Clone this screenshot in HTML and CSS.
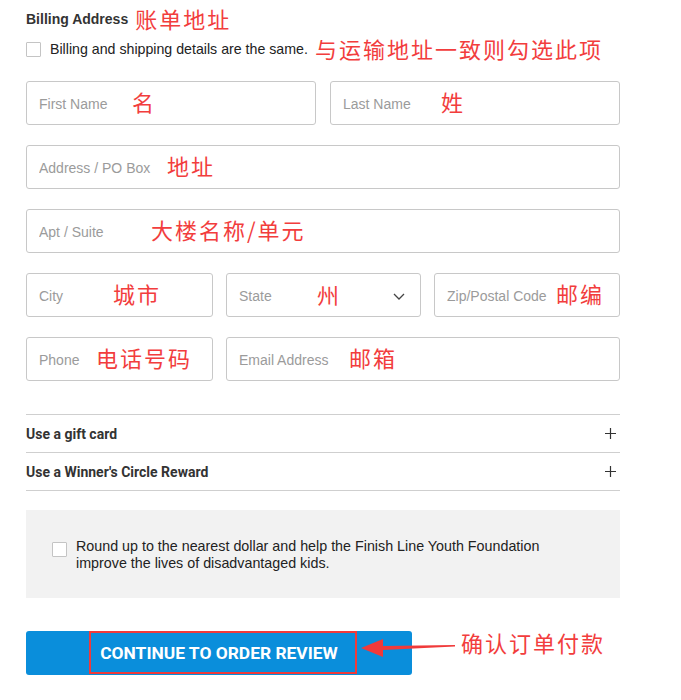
FILE: index.html
```html
<!DOCTYPE html>
<html lang="en">
<head>
    <meta charset="UTF-8">
    <meta name="viewport" content="width=device-width, initial-scale=1.0">
    <title>Billing Address</title>
    <link rel="stylesheet" href="styles.css">
</head>
<body>
    <div class="container">
        <div class="title-row">
            <h3 class="section-title">Billing Address</h3>
            <span class="note">账单地址</span>
        </div>
        <label class="same-row">
            <input type="checkbox" class="check">
            <span class="same-text">Billing and shipping details are the same.</span>
            <span class="note note-same">与运输地址一致则勾选此项</span>
        </label>

        <div class="fields">
            <div class="row row-2">
                <div class="field">
                    <input type="text" placeholder="First Name">
                    <span class="note n-first">名</span>
                </div>
                <div class="field">
                    <input type="text" placeholder="Last Name">
                    <span class="note n-last">姓</span>
                </div>
            </div>
            <div class="row">
                <div class="field">
                    <input type="text" placeholder="Address / PO Box">
                    <span class="note n-address">地址</span>
                </div>
            </div>
            <div class="row">
                <div class="field">
                    <input type="text" placeholder="Apt / Suite">
                    <span class="note n-apt">大楼名称/单元</span>
                </div>
            </div>
            <div class="row row-3">
                <div class="field">
                    <input type="text" placeholder="City">
                    <span class="note n-city">城市</span>
                </div>
                <div class="field field-select">
                    <span class="select-label">State</span>
                    <span class="note n-state">州</span>
                    <svg class="chevron" width="12" height="7" viewBox="0 0 12 7">
                        <polyline points="1,1 6,6 11,1" fill="none" stroke="#444" stroke-width="1.3"/>
                    </svg>
                </div>
                <div class="field">
                    <input type="text" placeholder="Zip/Postal Code">
                    <span class="note n-zip">邮编</span>
                </div>
            </div>
            <div class="row row-3">
                <div class="field">
                    <input type="text" placeholder="Phone">
                    <span class="note n-phone">电话号码</span>
                </div>
                <div class="field field-wide">
                    <input type="email" placeholder="Email Address">
                    <span class="note n-email">邮箱</span>
                </div>
            </div>
        </div>

        <div class="extras">
            <div class="extra-item">
                <span>Use a gift card</span>
                <svg class="plus" width="11" height="11" viewBox="0 0 11 11">
                    <path d="M5.5 0V11M0 5.5H11" stroke="#333" stroke-width="1.2"/>
                </svg>
            </div>
            <div class="extra-item">
                <span>Use a Winner's Circle Reward</span>
                <svg class="plus" width="11" height="11" viewBox="0 0 11 11">
                    <path d="M5.5 0V11M0 5.5H11" stroke="#333" stroke-width="1.2"/>
                </svg>
            </div>
        </div>

        <label class="roundup">
            <input type="checkbox" class="check">
            <span class="roundup-text">Round up to the nearest dollar and help the Finish Line Youth Foundation improve the lives of disadvantaged kids.</span>
        </label>

        <div class="submit-row">
            <button type="submit" class="btn-submit">CONTINUE TO ORDER REVIEW</button>
            <span class="mark"></span>
            <svg class="arrow" width="96" height="22" viewBox="0 0 96 22">
                <polygon points="94,8 94,9.5 22,13 22,20 0,11 22,2 22,9" fill="#f03a3a"/>
            </svg>
            <span class="note note-submit">确认订单付款</span>
        </div>
    </div>
</body>
</html>
```

FILE: styles.css
```css
body {
    margin: 0;
    background-color: #fff;
    font-family: 'Liberation Sans', Arial, sans-serif;
    color: #222;
}
.container {
    width: 594px;
    padding: 7px 26px 20px;
}
.note {
    font-family: 'Noto Sans CJK SC', sans-serif;
    font-size: 22px;
    letter-spacing: 2px;
    color: #f23d3d;
    line-height: 24px;
    white-space: nowrap;
}
.title-row {
    display: flex;
    align-items: center;
    height: 24px;
}
.title-row .note {
    margin-top: -3px;
}
.section-title {
    margin: 0 7px 0 0;
    font-size: 14px;
    font-weight: bold;
    color: #333;
}
.same-row {
    display: flex;
    align-items: center;
    height: 20px;
    margin-top: 8px;
}
.check {
    -webkit-appearance: none;
    appearance: none;
    width: 15px;
    height: 15px;
    margin: 0;
    flex-shrink: 0;
    border: 1px solid #c4c4c4;
    border-radius: 1px;
    background-color: #fff;
}
.same-text {
    margin-left: 9px;
    font-size: 14.2px;
    color: #222;
}
.note-same {
    margin-left: 7px;
    margin-top: -3px;
}
.fields {
    display: flex;
    flex-direction: column;
    gap: 20px;
    margin-top: 22px;
}
.row {
    display: grid;
    grid-template-columns: 1fr;
}
.row-2 {
    grid-template-columns: 1fr 1fr;
    column-gap: 14px;
}
.row-3 {
    grid-template-columns: 187px 195px 1fr;
    column-gap: 13px;
}
.field {
    position: relative;
    height: 44px;
}
.field input {
    box-sizing: border-box;
    width: 100%;
    height: 44px;
    padding: 2px 12px 0;
    border: 1px solid #c8c8c8;
    border-radius: 3px;
    font-family: inherit;
    font-size: 14px;
    color: #222;
    outline: none;
}
.field input::placeholder {
    color: #9b9b9b;
}
.field-wide {
    grid-column: span 2;
}
.field-select {
    box-sizing: border-box;
    display: flex;
    align-items: center;
    padding: 2px 12px 0;
    border: 1px solid #c8c8c8;
    border-radius: 3px;
}
.select-label {
    font-size: 14px;
    color: #9b9b9b;
}
.chevron {
    position: absolute;
    right: 15px;
    top: 19px;
}
.field .note {
    position: absolute;
    top: 8px;
}
.n-first { left: 106px; }
.n-last { left: 111px; }
.n-address { left: 141px; }
.n-apt { left: 125px; }
.n-city { left: 87px; }
.n-state { left: 90px; }
.n-zip { left: 122px; }
.n-phone { left: 70px; }
.n-email { left: 123px; }
.extras {
    margin-top: 33px;
    border-top: 1px solid #cfcfcf;
}
.extra-item {
    display: flex;
    justify-content: space-between;
    align-items: center;
    height: 37px;
    padding-right: 4px;
    border-bottom: 1px solid #cfcfcf;
    font-family: 'Liberation Sans Narrow', 'Roboto', sans-serif;
    font-size: 14px;
    font-weight: bold;
    color: #333;
}
.roundup {
    display: flex;
    align-items: flex-start;
    margin-top: 19px;
    padding: 28px 26px 27px;
    height: 33px;
    background-color: #f2f2f2;
}
.roundup .check {
    margin-top: 4px;
}
.roundup-text {
    max-width: 475px;
    margin-left: 9px;
    font-size: 14.3px;
    line-height: 17px;
    color: #222;
}
.submit-row {
    position: relative;
    margin-top: 33px;
    height: 44px;
}
.btn-submit {
    display: block;
    width: 386px;
    height: 44px;
    border: none;
    border-radius: 3px;
    background-color: #0a8edb;
    color: #fff;
    font-family: 'Liberation Sans Narrow', 'Roboto', sans-serif;
    font-size: 17.4px;
    font-weight: bold;
    cursor: pointer;
}
.mark {
    position: absolute;
    left: 63px;
    top: 0;
    width: 264px;
    height: 39px;
    border: 2px solid #f03a3a;
}
.arrow {
    position: absolute;
    left: 335px;
    top: 6px;
}
.note-submit {
    position: absolute;
    left: 435px;
    top: -1px;
}
```
